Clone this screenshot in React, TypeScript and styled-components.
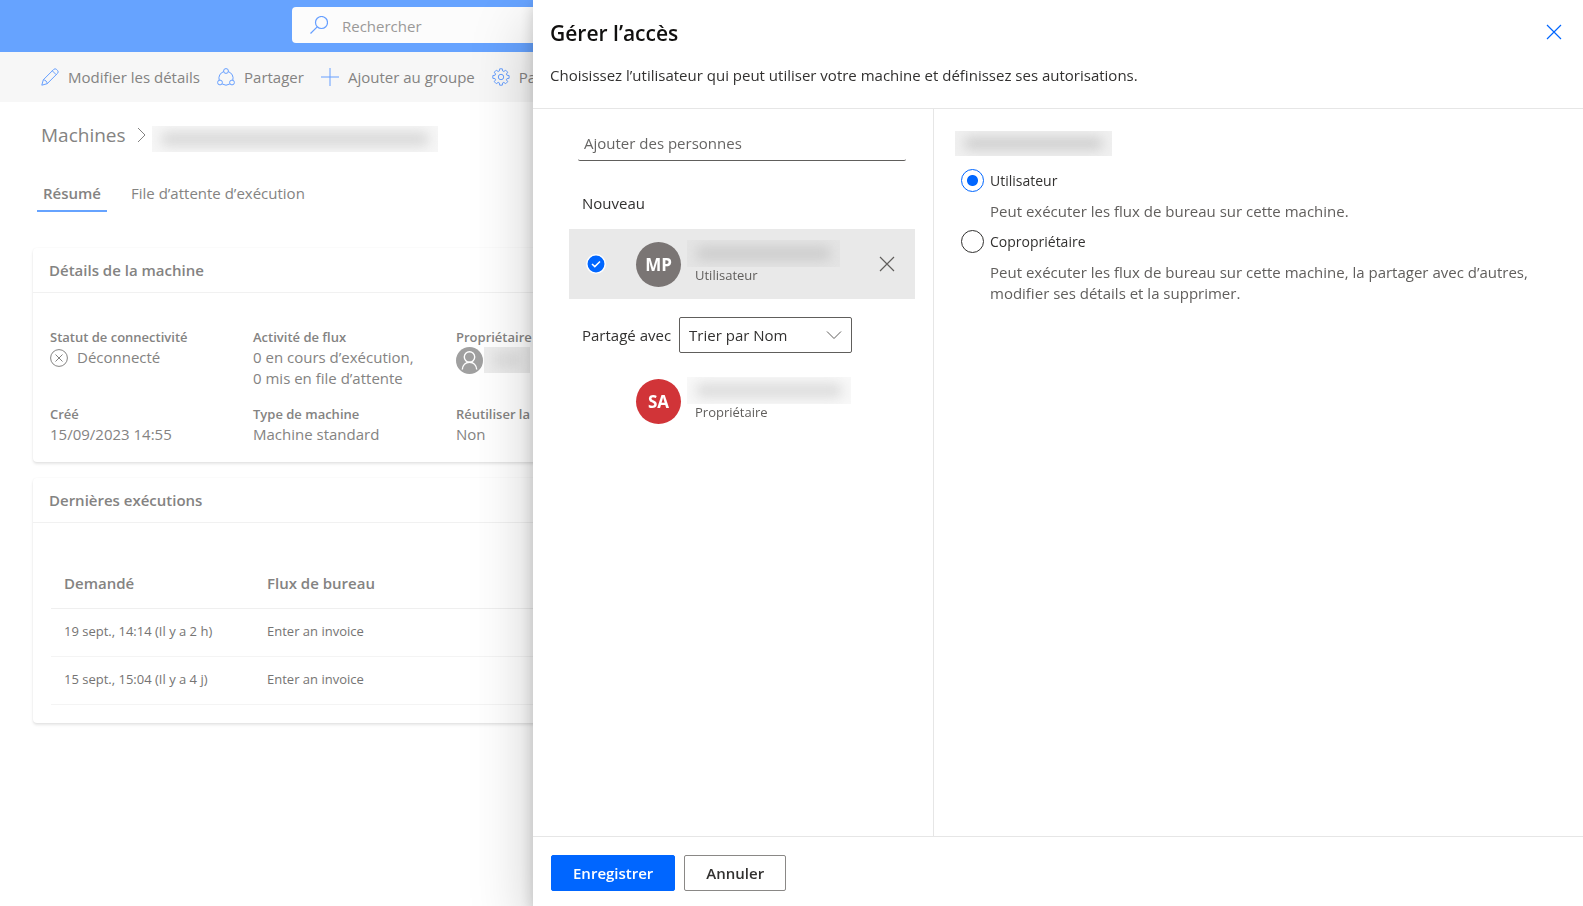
import React, { useState } from "react";
import styled, { createGlobalStyle } from "styled-components";

const GlobalStyle = createGlobalStyle`
  *, *::before, *::after { box-sizing: border-box; }
  html, body { margin: 0; height: 100%; }
  body {
    background: #fff;
    color: #323130;
    font-family: "Open Sans", "Noto Sans", sans-serif;
    font-size: 15px;
    line-height: 21px;
    overflow-x: hidden;
  }
  button, input, select { font: inherit; color: inherit; }
  h1, h2, h3, p, dl, dd { margin: 0; font-weight: inherit; font-size: inherit; }
`;

const muted = "#848382";
const softBlue = "#669fff";
const blue = "#0066ff";

/* ---------- Page behind the panel ---------- */

const Page = styled.div`
  min-height: 100vh;
  color: ${muted};
  overflow: hidden;
`;

const TopBar = styled.header`
  display: flex;
  height: 52px;
  padding: 7px 0 9px 292px;
  background: #66a3ff;
`;

const SearchBox = styled.label`
  display: flex;
  align-items: center;
  gap: 14px;
  width: 468px;
  padding: 0 18px;
  border-radius: 4px;
  background: #fcfcfc;
`;

const SearchInput = styled.input`
  flex: 1;
  min-width: 0;
  height: 100%;
  border: 0;
  padding: 2px 0 0;
  background: transparent;
  outline: none;
  &::placeholder { color: #9a9998; opacity: 1; }
`;

const CommandBar = styled.nav`
  display: flex;
  align-items: center;
  gap: 17px;
  height: 50px;
  padding-left: 41px;
  background: #f7f7f7;
`;

const Command = styled.button`
  display: flex;
  align-items: center;
  gap: 9px;
  padding: 0;
  border: 0;
  background: none;
  white-space: nowrap;
`;

const Icon = styled.svg<{ $size?: number }>`
  flex: none;
  display: block;
  width: ${(p) => p.$size ?? 18}px;
  height: ${(p) => p.$size ?? 18}px;
  fill: none;
  stroke: currentColor;
`;

const BlueIcon = styled(Icon)`
  color: ${softBlue};
`;

const Breadcrumb = styled.nav`
  display: flex;
  align-items: center;
  gap: 2px;
  height: 34px;
  margin: 16px 0 0 41px;
  font-size: 19px;
`;

const Crumb = styled.a`
  margin-right: 6px;
  color: inherit;
  text-decoration: none;
`;

const Redacted = styled.span<{ $w: number; $h: number; $bg: string; $ink: string }>`
  flex: none;
  align-self: flex-end;
  display: block;
  width: ${(p) => p.$w}px;
  height: ${(p) => p.$h}px;
  padding: 6px 9px;
  overflow: hidden;
  background: ${(p) => p.$bg};
  &::before {
    content: "";
    display: block;
    height: 100%;
    border-radius: 6px;
    background: ${(p) => p.$ink};
    filter: blur(6px);
  }
`;

const Tabs = styled.div`
  display: flex;
  gap: 18px;
  margin: 24px 0 0 37px;
`;

const Tab = styled.button<{ $active?: boolean }>`
  height: 36px;
  padding: 0 6px;
  border: 0;
  border-bottom: 2px solid ${(p) => (p.$active ? "#66a3ff" : "transparent")};
  background: none;
  font-weight: ${(p) => (p.$active ? 600 : 400)};
`;

const Cards = styled.main`
  display: flex;
  flex-direction: column;
  gap: 16px;
  padding: 36px 33px;
`;

const Card = styled.section`
  border-radius: 4px;
  background: #fff;
  box-shadow: 0 2px 3px rgba(0, 0, 0, 0.1), 0 0 2px rgba(0, 0, 0, 0.06);
`;

const CardTitle = styled.h2`
  padding: 12px 16px 11px;
  border-bottom: 1px solid #f1f1f1;
  font-weight: 600;
`;

const Details = styled.dl`
  display: grid;
  grid-template-columns: repeat(3, 187px);
  gap: 16px;
  padding: 35px 17px 17px;
`;

const Term = styled.dt`
  font-size: 13px;
  line-height: 19px;
  font-weight: 600;
  white-space: nowrap;
`;

const Value = styled.dd`
  display: flex;
  align-items: center;
  gap: 9px;
  white-space: nowrap;
`;

const OwnerValue = styled(Value)`
  gap: 1px;
  height: 26px;
`;

const RunsTable = styled.table`
  width: calc(100% - 36px);
  margin: 36px 18px 0;
  border-collapse: collapse;
  table-layout: fixed;
`;

const HeadCell = styled.th<{ $rest?: boolean }>`
  width: ${(p) => (p.$rest ? "auto" : "203px")};
  height: 49px;
  padding: 0 13px;
  border-bottom: 1px solid #efefef;
  text-align: left;
  font-weight: 600;
`;

const Cell = styled.td`
  height: 48px;
  padding: 0 13px 2px;
  border-bottom: 1px solid #f4f4f4;
  font-size: 13px;
  white-space: nowrap;
  color: #757473;
`;

const CardFoot = styled.div`
  height: 18px;
`;

/* ---------- Access panel ---------- */

const Panel = styled.aside`
  position: fixed;
  top: 0;
  right: 0;
  bottom: 0;
  left: 533px;
  display: flex;
  flex-direction: column;
  background: #fff;
  box-shadow: 0 26px 58px rgba(0, 0, 0, 0.22), 0 5px 14px rgba(0, 0, 0, 0.18);
  @media (max-width: 1100px) { left: 0; }
`;

const PanelHeader = styled.header`
  display: flex;
  justify-content: space-between;
  align-items: flex-start;
  padding: 18px 17px 22px;
  border-bottom: 1px solid #e6e6e6;
`;

const PanelTitle = styled.h1`
  margin-bottom: 17px;
  font-size: 21px;
  line-height: 30px;
  font-weight: 600;
  color: #11100f;
`;

const IconButton = styled.button<{ $color: string }>`
  display: flex;
  padding: 4px;
  border: 0;
  background: none;
  color: ${(p) => p.$color};
`;

const CloseButton = styled(IconButton)`
  margin-top: 2px;
`;

const PanelBody = styled.div`
  flex: 1;
  display: flex;
  min-height: 0;
`;

const People = styled.section`
  flex: none;
  width: 401px;
  padding: 16px 18px 0 36px;
  border-right: 1px solid #e6e6e6;
`;

const PeopleInput = styled.input`
  display: block;
  width: calc(100% - 18px);
  height: 36px;
  margin: 0 9px;
  padding: 0 6px;
  border: 0;
  border-bottom: 1px solid #605e5c;
  border-radius: 2px;
  background: transparent;
  outline: none;
  &::placeholder { color: #666564; opacity: 1; }
`;

const GroupTitle = styled.h2`
  margin: 32px 0 15px 13px;
`;

const Person = styled.div<{ $selected?: boolean }>`
  display: flex;
  align-items: center;
  height: 70px;
  padding: 0 16px 0 17px;
  background: ${(p) => (p.$selected ? "#e9e9e9" : "transparent")};
`;

const Mark = styled.span`
  flex: none;
  width: 50px;
`;

const Avatar = styled.span<{ $color: string }>`
  flex: none;
  display: flex;
  align-items: center;
  justify-content: center;
  width: 45px;
  height: 45px;
  border-radius: 50%;
  background: ${(p) => p.$color};
  color: #fff;
  font-size: 17px;
  font-weight: 700;
`;

const PersonText = styled.div`
  flex: 1;
  padding: 0 0 6px 6px;
`;

const Role = styled.p`
  padding-left: 8px;
  font-size: 13px;
  line-height: 16px;
  color: #605e5c;
`;

const SortRow = styled.div`
  display: flex;
  align-items: center;
  gap: 8px;
  margin: 18px 0 13px 13px;
`;

const SelectWrap = styled.div`
  position: relative;
  width: 173px;
`;

const Select = styled.select`
  display: block;
  appearance: none;
  width: 100%;
  height: 36px;
  padding: 0 30px 0 9px;
  border: 1px solid #605e5c;
  border-radius: 2px;
  background: #fff;
`;

const SelectArrow = styled(Icon)`
  position: absolute;
  top: 10px;
  right: 10px;
  pointer-events: none;
  color: #605e5c;
`;

const Permissions = styled.fieldset`
  flex: 1;
  min-width: 0;
  margin: 0;
  padding: 22px 40px 0 21px;
  border: 0;
`;

const Option = styled.label`
  display: flex;
  align-items: center;
  gap: 6px;
  height: 23px;
  padding-left: 6px;
  font-size: 14px;
`;

const OptionHelp = styled.p`
  padding: 9px 0 8px 35px;
  color: #605e5c;
`;

const Radio = styled.input`
  appearance: none;
  width: 23px;
  height: 23px;
  margin: 0;
  border: 1px solid #323130;
  border-radius: 50%;
  &:checked {
    border-color: ${blue};
    background: radial-gradient(circle, ${blue} 5px, transparent 6px);
  }
`;

const PermissionName = styled.div`
  margin-bottom: 13px;
`;

const PanelFooter = styled.footer`
  display: flex;
  gap: 9px;
  padding: 18px 18px 15px;
  border-top: 1px solid #e6e6e6;
`;

const ActionButton = styled.button<{ $primary?: boolean }>`
  height: 36px;
  padding: 0 21px;
  border: 1px solid ${(p) => (p.$primary ? blue : "#8a8886")};
  border-radius: 2px;
  background: ${(p) => (p.$primary ? blue : "#fff")};
  color: ${(p) => (p.$primary ? "#fff" : "#323130")};
  font-weight: 600;
`;

/* ---------- Icons ---------- */

const PencilIcon = () => (
  <BlueIcon viewBox="0 0 18 18">
    <path d="M.8 17.200l1.500-5.400L12.600 1.500a2.100 2.100 0 0 1 3 0l.9.9a2.100 2.100 0 0 1 0 3L6.200 15.700zM11.300 2.800l3.900 3.900M2.300 11.800c2.200.2 3.700 1.700 3.900 3.900" />
  </BlueIcon>
);

const ShareIcon = () => (
  <BlueIcon viewBox="0 0 18 18">
    <circle cx="9" cy="3" r="2.400" />
    <circle cx="3" cy="14.500" r="2.400" />
    <circle cx="15" cy="14.500" r="2.400" />
    <path d="M6.700 3.600A7 7 0 0 0 2.200 12.200M11.300 3.600a7 7 0 0 1 4.500 8.600M5.200 16a7 7 0 0 0 7.600 0" />
  </BlueIcon>
);

const PlusIcon = () => (
  <BlueIcon viewBox="0 0 18 18">
    <path d="M9 0v18M0 9h18" />
  </BlueIcon>
);

const GearIcon = () => (
  <BlueIcon viewBox="0 0 18 18">
    <circle cx="9" cy="9" r="2.700" />
    <path d="M7.700.8h2.600l.4 2.200 1.100.5 1.900-1.300 2 2-1.300 1.900.5 1.100 2.200.4v2.700l-2.200.4-.5 1.100 1.300 1.900-2 2-1.900-1.300-1.100.5-.4 2.300H7.700l-.4-2.300-1.100-.5-1.900 1.300-2-2 1.300-1.900-.5-1.100-2.300-.4V7.600l2.300-.4.5-1.100-1.300-1.900 2-2 1.900 1.300 1.100-.5z" />
  </BlueIcon>
);

const SearchIcon = () => (
  <BlueIcon viewBox="0 0 18 18" strokeWidth="1.200">
    <circle cx="11.500" cy="6.500" r="6" />
    <path d="M7.200 10.800L.5 17.500" />
  </BlueIcon>
);

const CloseIcon = () => (
  <Icon viewBox="0 0 16 16" $size={16}>
    <path d="M1 1l14 14M15 1L1 15" strokeWidth="1.200" />
  </Icon>
);

const OfflineIcon = () => (
  <Icon viewBox="0 0 18 18">
    <circle cx="9" cy="9" r="8.400" />
    <path d="M5.500 5.500l7 7M12.500 5.500l-7 7" />
  </Icon>
);

const OwnerIcon = () => (
  <Icon viewBox="0 0 27 27" $size={27}>
    <circle cx="13.500" cy="13.500" r="13.500" fill="#a0a0a0" stroke="none" />
    <g stroke="#fff" strokeWidth="1.400">
      <circle cx="13.500" cy="10" r="5.200" />
      <path d="M6.300 22.500c.3-4.500 3.300-7.300 7.200-7.300s6.900 2.800 7.200 7.300" />
    </g>
  </Icon>
);

const CheckIcon = () => (
  <Icon viewBox="0 0 20 20" $size={20}>
    <circle cx="10" cy="10" r="9.200" fill={blue} stroke="#fff" strokeWidth="1.500" />
    <path d="M6 10l2.800 2.600L14 7.500" stroke="#fff" strokeWidth="1.500" />
  </Icon>
);

const runs = [
  { date: "19 sept., 14:14 (Il y a 2 h)", flow: "Enter an invoice" },
  { date: "15 sept., 15:04 (Il y a 4 j)", flow: "Enter an invoice" },
];

export default function App() {
  const [role, setRole] = useState("user");

  return (
    <>
      <GlobalStyle />
      <Page>
        <TopBar>
          <SearchBox>
            <SearchIcon />
            <SearchInput type="search" aria-label="Rechercher" placeholder="Rechercher" />
          </SearchBox>
        </TopBar>
        <CommandBar>
          <Command><PencilIcon />Modifier les détails</Command>
          <Command><ShareIcon />Partager</Command>
          <Command><PlusIcon />Ajouter au groupe</Command>
          <Command><GearIcon />Pa</Command>
        </CommandBar>
        <Breadcrumb>
          <Crumb href="#">Machines</Crumb>
          <Icon viewBox="0 0 16 16" $size={16}><path d="M4 1l7 7-7 7" /></Icon>
          <Redacted $w={286} $h={26} $bg="#f6f6f6" $ink="#d9d9d9" />
        </Breadcrumb>
        <Tabs>
          <Tab $active>Résumé</Tab>
          <Tab>File d’attente d’exécution</Tab>
        </Tabs>
        <Cards>
          <Card>
            <CardTitle>Détails de la machine</CardTitle>
            <Details>
              <div>
                <Term>Statut de connectivité</Term>
                <Value><OfflineIcon />Déconnecté</Value>
              </div>
              <div>
                <Term>Activité de flux</Term>
                <Value>0 en cours d’exécution,</Value>
                <Value>0 mis en file d’attente</Value>
              </div>
              <div>
                <Term>Propriétaire</Term>
                <OwnerValue>
                  <OwnerIcon />
                  <Redacted $w={46} $h={26} $bg="#ededed" $ink="#dedede" />
                </OwnerValue>
              </div>
              <div>
                <Term>Créé</Term>
                <Value>15/09/2023 14:55</Value>
              </div>
              <div>
                <Term>Type de machine</Term>
                <Value>Machine standard</Value>
              </div>
              <div>
                <Term>Réutiliser la session</Term>
                <Value>Non</Value>
              </div>
            </Details>
          </Card>
          <Card>
            <CardTitle>Dernières exécutions</CardTitle>
            <RunsTable>
              <thead>
                <tr>
                  <HeadCell>Demandé</HeadCell>
                  <HeadCell>Flux de bureau</HeadCell>
                  <HeadCell $rest aria-hidden="true" />
                </tr>
              </thead>
              <tbody>
                {runs.map((r) => (
                  <tr key={r.date}>
                    <Cell>{r.date}</Cell>
                    <Cell colSpan={2}>{r.flow}</Cell>
                  </tr>
                ))}
              </tbody>
            </RunsTable>
            <CardFoot />
          </Card>
        </Cards>
      </Page>

      <Panel role="dialog" aria-labelledby="panel-title">
        <PanelHeader>
          <div>
            <PanelTitle id="panel-title">Gérer l’accès</PanelTitle>
            <p>Choisissez l’utilisateur qui peut utiliser votre machine et définissez ses autorisations.</p>
          </div>
          <CloseButton $color={blue} aria-label="Fermer"><CloseIcon /></CloseButton>
        </PanelHeader>
        <PanelBody>
          <People>
            <PeopleInput aria-label="Ajouter des personnes" placeholder="Ajouter des personnes" />
            <GroupTitle>Nouveau</GroupTitle>
            <Person $selected>
              <Mark><CheckIcon /></Mark>
              <Avatar $color="#7a7574">MP</Avatar>
              <PersonText>
                <Redacted $w={153} $h={27} $bg="#e4e4e4" $ink="#cecece" />
                <Role>Utilisateur</Role>
              </PersonText>
              <IconButton $color="#605e5c" aria-label="Supprimer"><CloseIcon /></IconButton>
            </Person>
            <SortRow>
              <label htmlFor="sort">Partagé avec</label>
              <SelectWrap>
                <Select id="sort"><option>Trier par Nom</option></Select>
                <SelectArrow viewBox="0 0 16 16" $size={16}><path d="M1 4.500l7 7 7-7" /></SelectArrow>
              </SelectWrap>
            </SortRow>
            <Person>
              <Mark />
              <Avatar $color="#d13438">SA</Avatar>
              <PersonText>
                <Redacted $w={164} $h={27} $bg="#f8f8f8" $ink="#dddddd" />
                <Role>Propriétaire</Role>
              </PersonText>
            </Person>
          </People>
          <Permissions>
            <PermissionName>
              <Redacted $w={157} $h={25} $bg="#f0f0f0" $ink="#cfcfcf" />
            </PermissionName>
            <Option>
              <Radio type="radio" name="role" checked={role === "user"} onChange={() => setRole("user")} />
              Utilisateur
            </Option>
            <OptionHelp>Peut exécuter les flux de bureau sur cette machine.</OptionHelp>
            <Option>
              <Radio type="radio" name="role" checked={role === "coowner"} onChange={() => setRole("coowner")} />
              Copropriétaire
            </Option>
            <OptionHelp>
              Peut exécuter les flux de bureau sur cette machine, la partager avec d’autres, modifier ses détails et la supprimer.
            </OptionHelp>
          </Permissions>
        </PanelBody>
        <PanelFooter>
          <ActionButton $primary>Enregistrer</ActionButton>
          <ActionButton>Annuler</ActionButton>
        </PanelFooter>
      </Panel>
    </>
  );
}
